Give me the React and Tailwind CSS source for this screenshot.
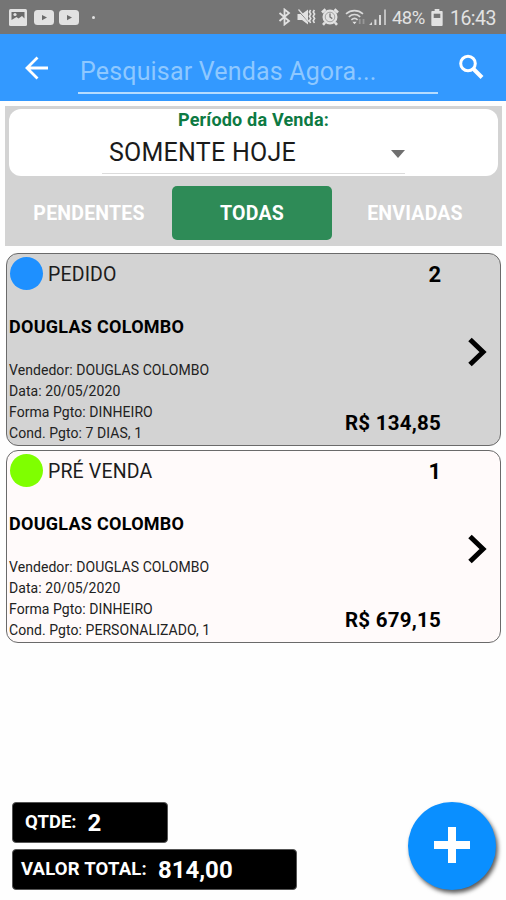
// src/App.jsx
import { useState } from 'react';

const vendas = [
  {
    id: 2,
    tipo: 'PEDIDO',
    cliente: 'DOUGLAS COLOMBO',
    vendedor: 'DOUGLAS COLOMBO',
    data: '20/05/2020',
    forma: 'DINHEIRO',
    cond: '7 DIAS, 1',
    valor: '134,85',
    dot: 'bg-[#1e90ff]',
    bg: 'bg-[#d3d3d3]',
  },
  {
    id: 1,
    tipo: 'PRÉ VENDA',
    cliente: 'DOUGLAS COLOMBO',
    vendedor: 'DOUGLAS COLOMBO',
    data: '20/05/2020',
    forma: 'DINHEIRO',
    cond: 'PERSONALIZADO, 1',
    valor: '679,15',
    dot: 'bg-[#7fff00]',
    bg: 'bg-[#fffafa]',
  },
];

const tabs = ['PENDENTES', 'TODAS', 'ENVIADAS'];

function VideoIcon() {
  return (
    <svg className="w-5 h-[15px]" viewBox="0 0 20 15">
      <rect width="20" height="15" rx="3.5" fill="#e2e2e2" />
      <path d="M8 5v5.200l5-2.600z" fill="#6b6b6b" />
    </svg>
  );
}

function StatusBar() {
  return (
    <div className="flex items-center h-[34px] bg-[#757575] text-[#e2e2e2] pl-[9px] pr-[10px]">
      <svg className="w-[18px] h-[17px]" viewBox="0 0 18 17">
        <rect width="18" height="17" rx="1.5" fill="#e2e2e2" />
        <path d="M2.5 3h13v6.500l-2.500-2.500-3.500 2.500-2-1.500-5 3z" fill="#6b6b6b" />
        <circle cx="6" cy="5.5" r="1.6" fill="#e2e2e2" />
      </svg>
      <div className="flex gap-[5px] ml-[7px]">
        <VideoIcon />
        <VideoIcon />
      </div>
      <div className="w-[3px] h-[3px] rounded-full bg-[#e2e2e2] ml-[13px]" />

      <div className="flex items-center ml-auto">
        <svg className="w-[13px] h-[18px] mr-[6px]" viewBox="0 0 13 18">
          <path d="M1.500 5l9.500 8L6.500 16.500v-15L11 5l-9.500 8" fill="none" stroke="#e2e2e2" strokeWidth="1.8" />
        </svg>
        {/* som desligado / vibrar */}
        <svg className="w-[19px] h-[18px]" viewBox="0 0 19 18">
          <path d="M0.500 6h4.500l6-4.500v15L5 12H.5z" fill="#e2e2e2" />
          <path d="M1 2.500l11 12" stroke="#757575" strokeWidth="1" />
          <path d="M1.500 1.500l10.500 12" stroke="#e2e2e2" strokeWidth="1.2" />
          <path d="M13.600 2l-1.200 2 1.400 2-1.400 2.200 1.400 2.300-1.400 2.200 1.200 2.300M17.400 2l-1.200 2 1.400 2-1.400 2.200 1.400 2.300-1.400 2.200 1.200 2.300" fill="none" stroke="#e2e2e2" strokeWidth="1.6" />
        </svg>
        <svg className="w-[18px] h-[18px] ml-[5px]" viewBox="0 0 18 18">
          <circle cx="9" cy="9" r="7.5" fill="#e2e2e2" />
          <path d="M1 4.500L4.500 1.200M17 4.500L13.500 1.200M4 14.500l-2 2.300M14 14.500l2 2.300" stroke="#e2e2e2" strokeWidth="2.6" />
          <circle cx="9" cy="9" r="4.800" fill="none" stroke="#9a9a9a" strokeWidth="0.9" />
          <path d="M9 5.500V9l2.300 1.600" fill="none" stroke="#757575" strokeWidth="1.3" />
        </svg>
        <svg className="w-[21px] h-[18px] ml-[6px]" viewBox="0 0 21 18" fill="none" stroke="#dadada">
          <path d="M1 5.800c5-4.300 12-4.300 17 0M3.800 8.800c3.500-3 8-3 11.400 0M6.400 11.800c2-1.700 4.400-1.700 6.200 0" strokeWidth="1.6" />
          <path d="M7.400 13.800h4.200l-2.100 2.500z" fill="#e2e2e2" stroke="none" />
          <path d="M14.700 11v5M18.500 11v5" stroke="#989898" strokeWidth="1.8" />
        </svg>
        <svg className="w-[18px] h-[17px] ml-[3px]" viewBox="0 0 18 17">
          <path d="M0 16l3-3v3zM5.400 10.500h2V16h-2zM10 6h2v10h-2z" fill="#dadada" />
          <path d="M15 .5h2V16h-2z" fill="#c0c0c0" />
        </svg>
        <span className="text-[18.500px] leading-[34px] pt-[1px] ml-[5px] w-[34px] whitespace-nowrap tracking-[-0.5px]">48%</span>
        <svg className="w-[12px] h-[17px] ml-[5px] mr-[1px]" viewBox="0 0 12 18">
          <path d="M3.500 0h5v2H11a1 1 0 0 1 1 1v14a1 1 0 0 1-1 1H1a1 1 0 0 1-1-1V3a1 1 0 0 1 1-1h2.500z" fill="#e2e2e2" />
          <path d="M2.500 5h7v4.500h-7z" fill="#757575" />
        </svg>
        <span className="text-[19.500px] leading-[34px] pt-[3px] ml-[6px] whitespace-nowrap tracking-[-0.5px]">16:43</span>
      </div>
    </div>
  );
}

function VendaCard({ venda }) {
  return (
    <div className={`flex h-[193px] rounded-[12px] border border-[#6a6a6a] ${venda.bg}`}>
      <div className="flex-1 pl-[2px]">
        <div className="flex items-center h-[33px] mt-[3px]">
          <div className={`w-[33px] h-[33px] ml-[1px] rounded-full ${venda.dot}`} />
          <span className="ml-[5px] pt-[2px] text-[19.500px] leading-[31px] tracking-[0.15px] text-[#1c1c1c]">{venda.tipo}</span>
        </div>
        <p className="mt-[25px] text-[18px] leading-6 tracking-[0.27px] font-bold whitespace-nowrap">{venda.cliente}</p>
        <div className="mt-[20.500px] text-[14px] leading-[21.200px] tracking-[0.06px] text-[#222] whitespace-nowrap">
          <p>Vendedor: {venda.vendedor}</p>
          <p>Data: {venda.data}</p>
          <p>Forma Pgto: {venda.forma}</p>
          <p>Cond. Pgto: {venda.cond}</p>
        </div>
      </div>
      <div className="flex flex-col justify-between items-end pt-[8px] pb-[9px] font-bold">
        <span className="text-[22px] leading-[26px]">{venda.id}</span>
        <span className="text-[20.500px] leading-[26px] tracking-[0.25px] whitespace-nowrap">R$ {venda.valor}</span>
      </div>
      <div className="flex items-center w-[59px] pl-[27px] pt-[4px]">
        <svg className="w-[19px] h-[30px]" viewBox="0 0 19 30">
          <path d="M2 2.500L15 15L2 27.500" fill="none" stroke="#000" strokeWidth="5" />
        </svg>
      </div>
    </div>
  );
}

export default function App() {
  const [tab, setTab] = useState('TODAS');
  const [busca, setBusca] = useState('');

  return (
    <div className="flex flex-col w-[506px] h-[900px] bg-[#fefefe] text-black overflow-hidden font-[Roboto,sans-serif]">
      <StatusBar />

      {/* Barra de pesquisa */}
      <div className="flex h-[67px] bg-[#3399ff] text-white">
        <svg className="w-6 h-6 ml-[25px] mt-[22px]" viewBox="0 0 24 24" fill="none" stroke="currentColor" strokeWidth="2.8">
          <path d="M23 12H3M12.500 1.500L2 12l10.500 10.500" />
        </svg>
        <input
          className="w-[360px] h-[48px] ml-[29px] mt-[12px] pl-[2px] pb-[5px] pt-[9px] text-[25px] tracking-[0.17px] border-b-2 border-[#b5dcff] outline-none placeholder:text-[#8ec8ff]"
          placeholder="Pesquisar Vendas Agora..."
          value={busca}
          onChange={e => setBusca(e.target.value)}
        />
        <svg className="w-[26px] h-[26px] ml-[20px] mt-[20px]" viewBox="0 0 26 26" fill="none" stroke="currentColor">
          <circle cx="10" cy="9.500" r="7.300" strokeWidth="3" />
          <path d="M15.500 15l8.500 8.500" strokeWidth="4" />
        </svg>
      </div>

      {/* Filtros */}
      <div className="mt-[5px] mx-[5px] mr-[4px] h-[140px] bg-[#d3d3d3] pt-[3px] px-1">
        <div className="h-[67px] rounded-[12px] bg-white flex flex-col items-center">
          <span className="text-[18px] leading-[21px] tracking-[0.18px] font-bold text-[#0d7a43] whitespace-nowrap">Período da Venda:</span>
          <div className="flex items-center justify-between w-[303px] h-[44px] pt-[3px] pl-[7px] border-b border-[#dcdcdc]">
            <span className="text-[25px] tracking-[0.25px] text-[#1a1a1a] whitespace-nowrap">SOMENTE HOJE</span>
            <svg className="w-[14px] h-[8px] mt-[2px]" viewBox="0 0 14 8">
              <path d="M0 0h14L7 8z" fill="#6f6f6f" />
            </svg>
          </div>
        </div>
        <div className="flex mt-[10px] gap-[3px]">
          {tabs.map(t => (
            <button
              key={t}
              onClick={() => setTab(t)}
              className={`w-[160px] h-[54px] pt-[2px] rounded-[5px] text-[19.500px] tracking-[0.2px] font-bold text-white ${
                tab === t ? 'bg-[#2e8b57]' : ''
              }`}
            >
              {t}
            </button>
          ))}
        </div>
      </div>

      {/* Lista de vendas */}
      <div className="flex flex-col gap-1 mt-[7px] ml-[6px] mr-[5px]">
        {vendas.map(v => (
          <VendaCard key={v.id} venda={v} />
        ))}
      </div>

      {/* Totais */}
      <div className="flex justify-between mt-auto pl-3 pr-[10px] pb-[10px] text-white font-bold">
        <div className="flex flex-col gap-[6px]">
          <div className="flex items-center w-[156px] h-[41px] pl-[12px] rounded-[4px] bg-black border border-[#555]">
            <span className="text-[18.500px]">QTDE:</span>
            <span className="text-[24px] ml-[11px]">2</span>
          </div>
          <div className="flex items-center w-[285px] h-[41px] pl-[8px] rounded-[4px] bg-black border border-[#555] whitespace-nowrap">
            <span className="text-[18.500px] tracking-[0.2px]">VALOR TOTAL:</span>
            <span className="text-[24px] ml-[11px]">814,00</span>
          </div>
        </div>
        <button className="flex items-center justify-center w-[88px] h-[88px] pb-[3px] rounded-full bg-[#0a8fff] shadow-[2px_3px_4px_rgba(0,0,0,0.65)]">
          <svg className="w-9 h-9" viewBox="0 0 36 36">
            <path d="M14 0h8v14h14v8H22v14h-8V22H0v-8h14z" fill="#fff" />
          </svg>
        </button>
      </div>
    </div>
  );
}
